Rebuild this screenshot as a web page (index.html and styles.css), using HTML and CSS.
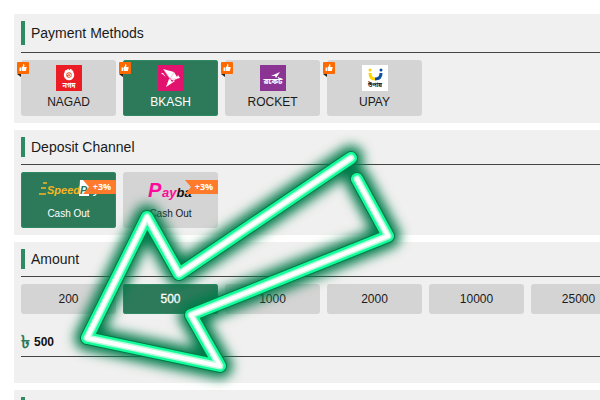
FILE: index.html
```
<!DOCTYPE html>
<html lang="en">

<head>
    <meta charset="UTF-8">
    <meta name="viewport" content="width=device-width, initial-scale=1.0">
    <title>Deposit</title>
    <link rel="stylesheet" href="styles.css">
</head>

<body>
    <!-- Shared thumb icon -->
    <svg class="sprite" aria-hidden="true">
        <symbol id="thumb" viewBox="0 0 16 16">
            <path d="M1 7h3v7H1zM5 7l3-3V1c2-1 3 1 3 2l-1 3h4c1 0 2 1 1 2l-1 5c0 1-1 1-2 1H7l-2-1z" fill="#fff"/>
        </symbol>
    </svg>

    <main>
        <section class="panel">
            <h2 class="tall">Payment Methods</h2>
            <div class="row">
                <button type="button" class="tile">
                    <span class="hot"><svg><use href="#thumb"/></svg></span>
                    <svg class="logo" viewBox="0 0 26 26">
                        <rect width="26" height="26" fill="#ec1c24"/>
                        <circle cx="13" cy="10" r="4" fill="#f0532d" stroke="#fff" stroke-width="2.4"/>
                        <path d="M9 7l1-2 1 1 1-2 1 2 2-2v2l2 0-1 2" fill="none" stroke="#fff" stroke-width="1"/>
                        <path d="M11 10c1-2 4-1 4 0s-2 2-3 1" fill="none" stroke="#fff" stroke-width="1"/>
                        <text x="13" y="23" text-anchor="middle" class="bn" font-size="7" fill="#fff">নগদ</text>
                    </svg>
                    NAGAD
                </button>
                <button type="button" class="tile active">
                    <span class="hot"><svg><use href="#thumb"/></svg></span>
                    <svg class="logo" viewBox="0 0 26 26">
                        <rect width="26" height="26" fill="#e2136e"/>
                        <path d="M5 4l11 3 2 7-4 3zM5 8h-2l5 4zM11 14l-3 8 9-6zM16 7l3 5-1 3zM18 14l2-4 2 3z" fill="#fff"/>
                        <path d="M5 4l9 12M16 7l-4 7 6 0" fill="none" stroke="#e2136e" stroke-width=".3"/>
                    </svg>
                    BKASH
                </button>
                <button type="button" class="tile">
                    <span class="hot"><svg><use href="#thumb"/></svg></span>
                    <svg class="logo" viewBox="0 0 26 26">
                        <rect width="26" height="26" fill="#8c3494"/>
                        <path d="M11 11l9-4-4 6-1-2z" fill="#fff"/>
                        <text x="13" y="19" text-anchor="middle" class="bn" font-size="8" fill="#fff">রকেট</text>
                    </svg>
                    ROCKET
                </button>
                <button type="button" class="tile">
                    <span class="hot"><svg><use href="#thumb"/></svg></span>
                    <svg class="logo" viewBox="0 0 26 26">
                        <rect width="26" height="26" fill="#fff"/>
                        <path d="M8 8c0 4 2 6 5 6" fill="none" stroke="#ffd400" stroke-width="3"/>
                        <path d="M13 14c4 0 6-2 6-6" fill="none" stroke="#0b4ea2" stroke-width="3"/>
                        <circle cx="8" cy="5" r="1.5" fill="#ffd400"/>
                        <circle cx="19" cy="5" r="1.5" fill="#0b4ea2"/>
                        <text x="13" y="22" text-anchor="middle" class="bn" font-size="6" fill="#111">উপায়</text>
                    </svg>
                    UPAY
                </button>
            </div>
        </section>

        <section class="panel">
            <h2>Deposit Channel</h2>
            <div class="row">
                <button type="button" class="tile channel active">
                    <span class="bonus">+3%</span>
                    <svg class="brand" viewBox="0 0 64 26">
                        <path d="M6 6h4M4 11h5M2 17h7" stroke="#f7b520" stroke-width="1.6"/>
                        <path d="M43 3h9v16H42z" fill="#fff"/>
                        <text x="10" y="17" class="speed" fill="#f7b520">Speed</text>
                        <text x="43" y="17" class="speed" fill="#2d7a5a">P<tspan fill="#fff">ay</tspan></text>
                    </svg>
                    Cash Out
                </button>
                <button type="button" class="tile channel">
                    <span class="bonus">+3%</span>
                    <svg class="brand" viewBox="0 0 64 26">
                        <text x="9" y="20" class="payba big" fill="#ff0a9b">P</text>
                        <text x="23" y="20" class="payba" fill="#ff0a9b">ay<tspan fill="#111">ba</tspan></text>
                    </svg>
                    Cash Out
                </button>
            </div>
        </section>

        <section class="panel">
            <h2>Amount</h2>
            <div class="row">
                <button type="button" class="tile amount">200</button>
                <button type="button" class="tile amount active">500</button>
                <button type="button" class="tile amount">1000</button>
                <button type="button" class="tile amount">2000</button>
                <button type="button" class="tile amount">10000</button>
                <button type="button" class="tile amount">25000</button>
            </div>
            <div class="field">
                <label for="amount">৳</label>
                <input type="text" id="amount" value="500">
            </div>
        </section>

        <section class="panel">
            <h2></h2>
        </section>
    </main>

    <!-- Neon arrow over the page -->
    <svg class="arrow" width="600" height="400" viewBox="0 0 600 400" aria-hidden="true">
        <defs>
            <filter id="glow" x="-20%" y="-20%" width="140%" height="140%">
                <feGaussianBlur stdDeviation="6"/>
            </filter>
            <path id="line" d="M351 158L179 274 147 217 87 338 220 366 191 315 388 236 357 179"/>
        </defs>
        <use href="#line" stroke="#007a4a" stroke-width="25" filter="url(#glow)"/>
        <use href="#line" stroke="#007a4a" stroke-width="14"/>
        <use href="#line" stroke="#14ff9c" stroke-width="12"/>
        <use href="#line" stroke="#b4fbdc" stroke-width="7"/>
        <use href="#line" stroke="#fff" stroke-width="4"/>
    </svg>
</body>

</html>
```
FILE: styles.css
```
* {
    box-sizing: border-box;
}

body {
    margin: 0;
    padding: 14px 0 0 14px;
    background-color: #fff;
    color: #1a1a1a;
    font-family: "Liberation Sans", Arial, sans-serif;
    font-size: 12px;
    height: 100vh;
    overflow: hidden;
}

.sprite {
    display: none;
}

.panel {
    background-color: #f0f0f0;
    padding: 7px 0 7px 7px;
    margin-bottom: 7px;
}

h2 {
    display: flex;
    align-items: center;
    gap: 6px;
    margin: 0;
    padding-bottom: 7px;
    border-bottom: 1px solid #444;
    font-size: 14px;
    font-weight: normal;
    line-height: 20px;
}

h2::before {
    content: "";
    width: 4px;
    height: 20px;
    background-color: #2d8a62;
}

h2.tall::before {
    height: 24px;
}

.row {
    display: flex;
    gap: 7px;
    padding-top: 7px;
    padding-left: 7px;
    margin-left: -7px;
    overflow: hidden;
}

/* Tiles */
.tile {
    position: relative;
    display: flex;
    flex-direction: column;
    align-items: center;
    justify-content: space-between;
    flex: 0 0 95px;
    height: 56px;
    padding: 5px 0 6px;
    border: none;
    border-radius: 3px;
    background-color: #d4d4d4;
    color: #1a1a1a;
    font-family: inherit;
    font-size: 12px;
    line-height: 16px;
    cursor: pointer;
}

.tile.active {
    background-color: #2d7a5a;
    box-shadow: inset 0 0 0 1px #2d8a62;
    color: #fff;
}

.channel {
    font-size: 10px;
}

.amount {
    height: 30px;
    justify-content: center;
    padding: 0;
}

.amount.active {
    -webkit-text-stroke: 0.3px #fff;
}

.logo {
    width: 26px;
    height: 26px;
}

.brand {
    width: 64px;
    height: 26px;
}

/* Recommended badge */
.hot {
    position: absolute;
    top: 2px;
    left: -4px;
    display: flex;
    align-items: center;
    justify-content: center;
    width: 12px;
    height: 12px;
    border-radius: 1px;
    background-color: #ff6a00;
}

.hot::after {
    content: "";
    position: absolute;
    top: 12px;
    left: 0;
    border-top: 3px solid #222;
    border-left: 4px solid transparent;
}

.hot svg {
    width: 8px;
    height: 8px;
}

/* Bonus ribbon */
.bonus {
    position: absolute;
    top: 8px;
    right: 0;
    width: 33px;
    padding-left: 5px;
    background-color: #ff7a2a;
    clip-path: polygon(0 0, 100% 0, 100% 100%, 0 100%, 6px 50%);
    color: #fff;
    font-family: "Open Sans", sans-serif;
    font-size: 9px;
    font-weight: bold;
    line-height: 14px;
}

.bn {
    font-family: "Noto Sans Bengali", "Noto Sans", sans-serif;
    font-weight: bold;
}

.speed {
    font-family: "Liberation Sans", Arial, sans-serif;
    font-size: 11px;
    font-style: italic;
    font-weight: bold;
}

.payba {
    font-family: "Liberation Sans", Arial, sans-serif;
    font-size: 13px;
    font-style: italic;
    font-weight: bold;
}

.payba.big {
    font-size: 20px;
}

/* Amount field */
.field {
    display: flex;
    align-items: center;
    gap: 4px;
    margin: 16px 0 19px;
    padding-bottom: 2px;
    border-bottom: 1px solid #444;
    font-weight: bold;
}

.field label {
    width: 9px;
    color: #2d7a5a;
    font-size: 18px;
    line-height: 24px;
}

.field input {
    flex: 1;
    min-width: 0;
    padding: 0;
    border: none;
    background: none;
    color: #111;
    font: inherit;
    outline: none;
}

.arrow {
    position: absolute;
    top: 0;
    left: 0;
    fill: none;
    stroke-linecap: round;
    stroke-linejoin: round;
    pointer-events: none;
}
```
